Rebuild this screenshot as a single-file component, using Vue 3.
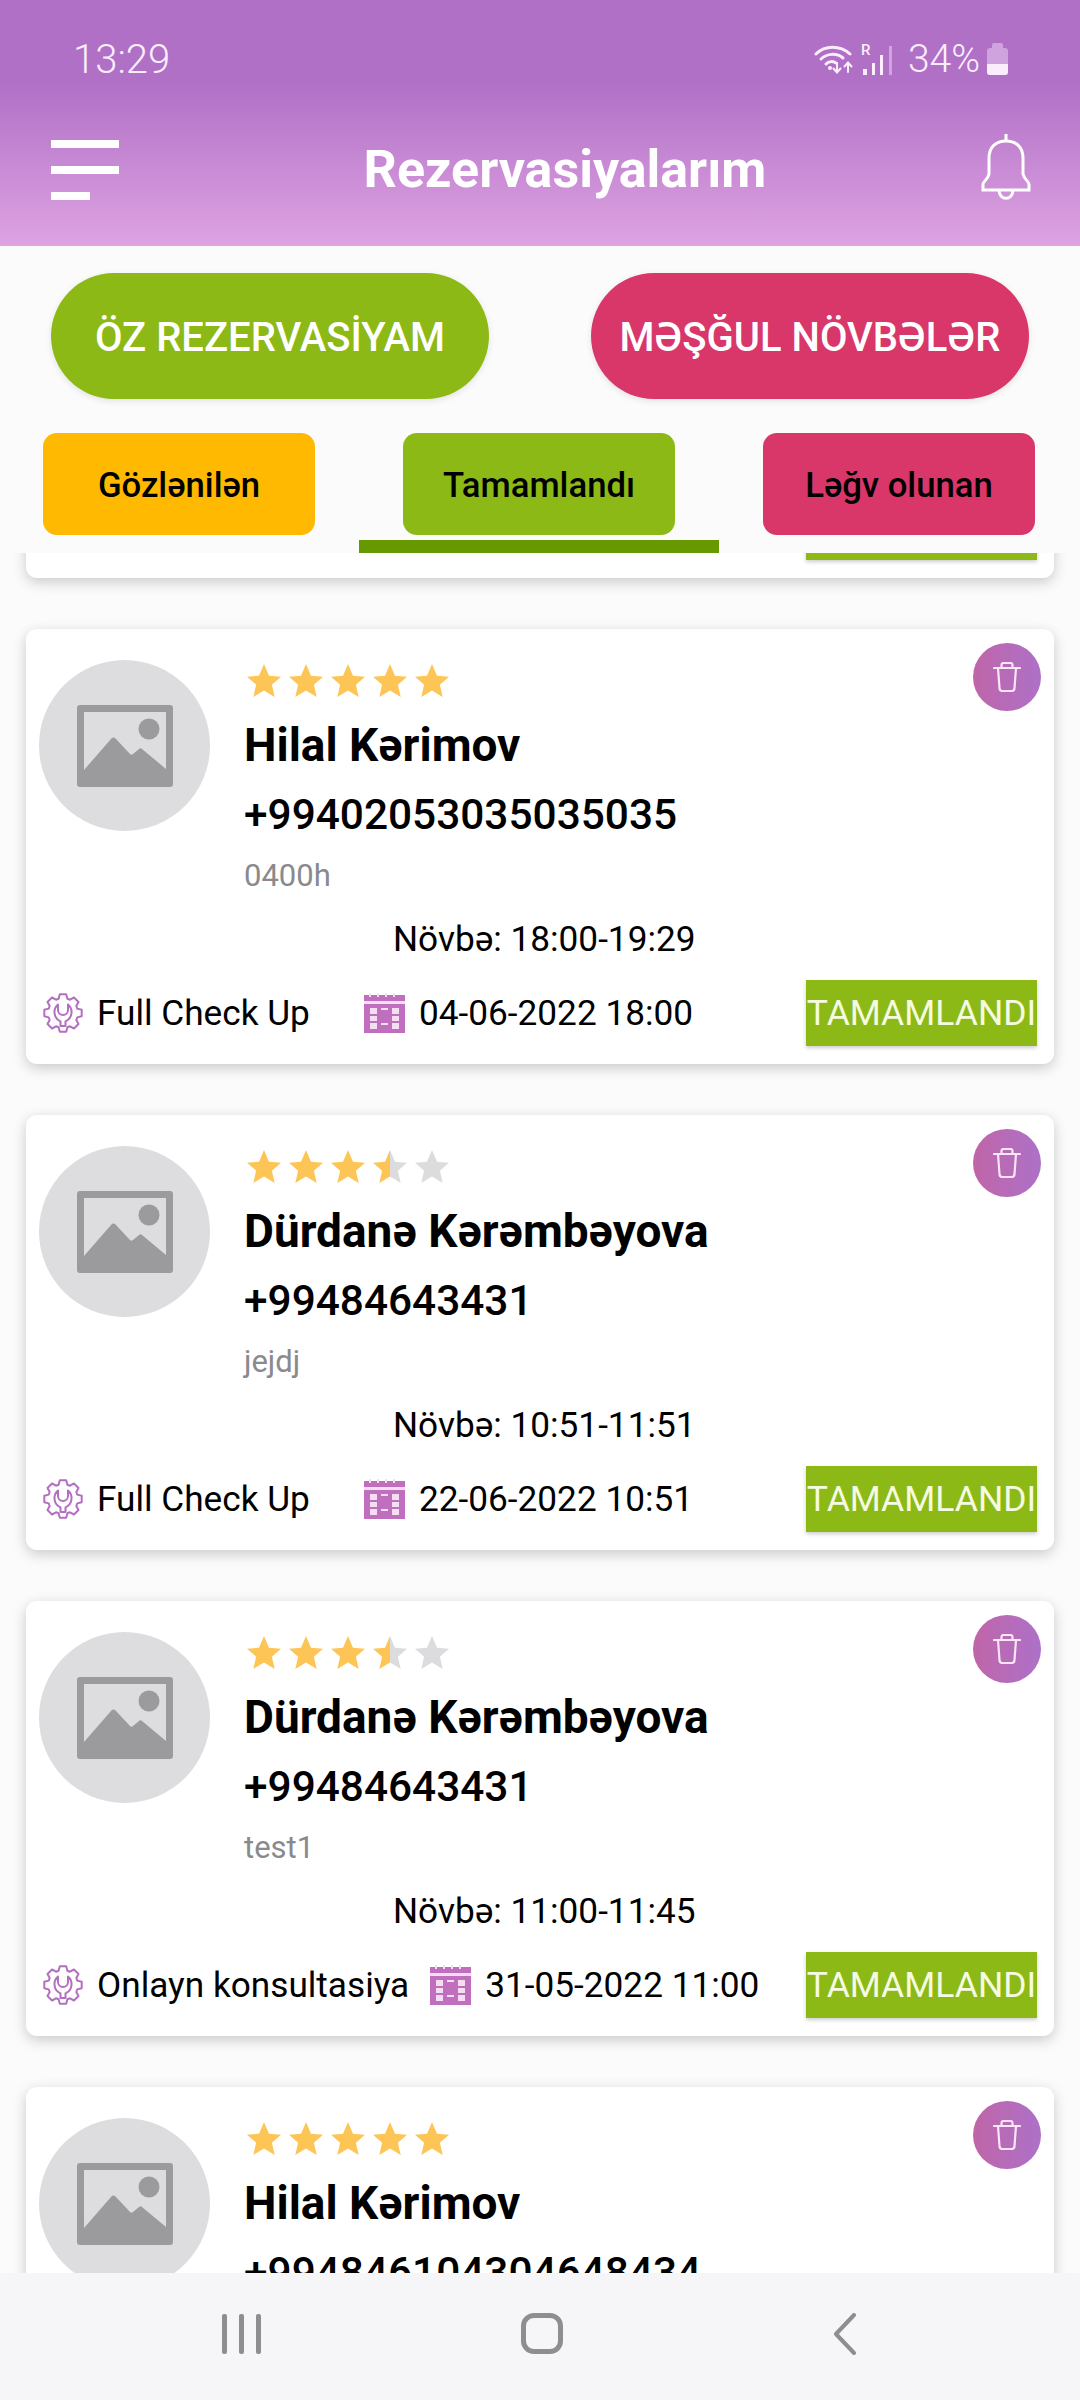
<template>
  <div class="screen">
    <header class="header">
      <div class="status">
        <span class="clock">13:29</span>
        <div class="status-right">
          <svg class="wifi" viewBox="0 0 40 30" aria-hidden="true">
            <g fill="none" stroke="#fbeefc" stroke-width="3" stroke-linecap="round">
              <path d="M2 10 C11 1 26 1 36 10" />
              <path d="M7 15 C13 9 23 9 29 14" />
              <path d="M12 20 C15 17 19 17 22 19" />
              <path d="M23 19v9M19.500 24.500 23 28.500l3.500-4" stroke-width="2" />
              <path d="M34 28v-9M30.500 22.500 34 18.500l3.500 4" stroke-width="2" />
            </g>
            <circle cx="16" cy="24" r="2" fill="#fbeefc" />
          </svg>
          <svg class="signal" viewBox="0 0 34 32" aria-hidden="true">
            <text x="0" y="12" class="roam">R</text>
            <rect x="2" y="26" width="4" height="6" fill="#fbeefc" />
            <rect x="11" y="20" width="3" height="12" fill="#fbeefc" />
            <rect x="19" y="12" width="3" height="20" fill="#fbeefc" />
            <rect x="28" y="3" width="3" height="29" fill="#cfa3de" />
          </svg>
          <span class="battery-text">34%</span>
          <div class="battery"><div class="battery-fill"></div></div>
        </div>
      </div>
      <div class="toolbar">
        <div class="burger">
          <span></span>
          <span></span>
          <span class="short"></span>
        </div>
        <h1 class="title">Rezervasiyalarım</h1>
        <svg class="bell" viewBox="0 0 50 66" aria-hidden="true">
          <g fill="none" stroke="#fff" stroke-width="3">
            <path d="M25 0v7" />
            <path d="M2 56v-6c0-2 5-5 6-10V24C8 13 15 7 25 7s17 6 17 17v16c1 5 6 8 6 10v6z" />
            <path d="M18 56c0 11 14 11 14 0" />
          </g>
        </svg>
      </div>
    </header>

    <div class="switch">
      <button class="pill green">ÖZ REZERVASİYAM</button>
      <button class="pill pink">MƏŞĞUL NÖVBƏLƏR</button>
    </div>

    <div class="tabs">
      <div v-for="t in tabs" :key="t.label" class="tab" :class="{ active: t.active }">
        <button class="tab-btn" :class="t.color">{{ t.label }}</button>
      </div>
    </div>

    <div class="list">
      <article v-for="(c, i) in cards" :key="i" class="card">
        <div class="trash">
          <svg viewBox="0 0 28 30" aria-hidden="true">
            <g fill="none" stroke="#fbe6f6" stroke-width="2.200" stroke-linejoin="round" stroke-linecap="round">
              <path d="M1 6h26" />
              <path d="M8.500 6V3c0-1 1-2 2-2h7c1 0 2 1 2 2v3" />
              <path d="M5 6l1.500 20c0 2 1 3 3 3h9c2 0 3-1 3-3L23 6" />
            </g>
          </svg>
        </div>
        <div class="top">
          <div class="avatar">
            <svg viewBox="0 0 96 82" aria-hidden="true">
              <path fill="#9b9a9d" fill-rule="evenodd" d="M3 0h90a3 3 0 0 1 3 3v76a3 3 0 0 1-3 3H3a3 3 0 0 1-3-3V3a3 3 0 0 1 3-3zM7 7v58l27-31c2-2 3-2 5 0l14 15c1 1 2 1 3 0l6-5c1-1 2-1 3 0l24 20V7z" />
              <circle cx="72" cy="24" r="10.500" fill="#9b9a9d" />
            </svg>
          </div>
          <div class="info">
            <div class="stars">
              <svg v-for="n in 5" :key="n" class="star" viewBox="0 0 34 33" aria-hidden="true">
                <defs>
                  <linearGradient :id="`half-${i}-${n}`">
                    <stop :offset="fillOf(c.rating, n)" stop-color="#fdc556" />
                    <stop :offset="fillOf(c.rating, n)" stop-color="#dcdcde" />
                  </linearGradient>
                </defs>
                <path :fill="`url(#half-${i}-${n})`" d="M17 0l5 11.700 12 1-9.100 8 2.800 12.300L17 26.500 6.300 33l2.800-12.300-9.100-8 12-1z" />
              </svg>
            </div>
            <div class="name">{{ c.name }}</div>
            <div class="phone">{{ c.phone }}</div>
            <div class="note">{{ c.note }}</div>
          </div>
        </div>
        <div class="shift">{{ c.shift }}</div>
        <div class="bottom">
          <svg class="gear" viewBox="0 0 40 40" aria-hidden="true">
            <g fill="none" stroke="#b36fc0" stroke-width="2" stroke-linejoin="round">
              <path :d="gearPath" />
              <path d="M15 11.500a10 10 0 0 0 2.500 16.800V33h5v-4.700A10 10 0 0 0 25 11.500V17a5 5 0 0 1-10 0z" />
            </g>
          </svg>
          <span class="service">{{ c.service }}</span>
          <svg class="calendar" viewBox="0 0 41 40" aria-hidden="true">
            <rect y="2" width="41" height="38" fill="#c06fbf" />
            <rect y="8" width="41" height="3" fill="#f3dff1" />
            <g fill="#f3dff1">
              <rect x="5" y="0" width="2" height="4" />
              <rect x="13" y="0" width="2" height="4" />
              <rect x="21" y="0" width="2" height="4" />
              <rect x="29" y="0" width="2" height="4" />
              <rect x="6" y="15" width="7" height="6" />
              <rect x="28" y="15" width="7" height="6" />
              <rect x="6" y="23" width="7" height="5" />
              <rect x="28" y="23" width="7" height="5" />
              <rect x="6" y="30" width="7" height="6" />
              <rect x="28" y="30" width="7" height="6" />
              <rect x="17" y="15" width="7" height="2" />
              <rect x="17" y="30" width="7" height="2" />
            </g>
          </svg>
          <span class="date">{{ c.date }}</span>
          <span class="done">TAMAMLANDI</span>
        </div>
      </article>
    </div>

    <nav class="navbar">
      <div class="recents"><span></span><span></span><span></span></div>
      <div class="home"></div>
      <svg class="back" viewBox="0 0 24 42" aria-hidden="true">
        <path d="M21 2 3 21l18 19" fill="none" stroke="#8e8e90" stroke-width="4" stroke-linecap="round" stroke-linejoin="round" />
      </svg>
    </nav>
  </div>
</template>

<script setup>
const tabs = [
  { label: 'Gözlənilən', color: 'amber' },
  { label: 'Tamamlandı', color: 'green', active: true },
  { label: 'Ləğv olunan', color: 'pink' },
]

const cards = [
  { name: '', phone: '', note: '', shift: '', service: '', date: '', rating: 5 },
  {
    name: 'Hilal Kərimov',
    phone: '+99402053035035035',
    note: '0400h',
    shift: 'Növbə: 18:00-19:29',
    service: 'Full Check Up',
    date: '04-06-2022 18:00',
    rating: 5,
  },
  {
    name: 'Dürdanə Kərəmbəyova',
    phone: '+99484643431',
    note: 'jejdj',
    shift: 'Növbə: 10:51-11:51',
    service: 'Full Check Up',
    date: '22-06-2022 10:51',
    rating: 3.5,
  },
  {
    name: 'Dürdanə Kərəmbəyova',
    phone: '+99484643431',
    note: 'test1',
    shift: 'Növbə: 11:00-11:45',
    service: 'Onlayn konsultasiya',
    date: '31-05-2022 11:00',
    rating: 3.5,
  },
  {
    name: 'Hilal Kərimov',
    phone: '+994846104304648434',
    note: '',
    shift: '',
    service: '',
    date: '',
    rating: 5,
  },
]

// share of star n that is coloured
function fillOf(rating, n) {
  return Math.max(0, Math.min(1, rating - n + 1))
}

// 8-tooth outline round the centre of a 40x40 box
const gearPath = (() => {
  const pts = []
  for (let i = 0; i < 8; i++) {
    const a = (i * Math.PI) / 4 - Math.PI / 2
    for (const [r, d] of [[15, -0.3], [19, -0.17], [19, 0.17], [15, 0.3]]) {
      const x = 20 + r * Math.cos(a + d)
      const y = 20 + r * Math.sin(a + d)
      pts.push(`${x.toFixed(1)} ${y.toFixed(1)}`)
    }
  }
  return `M${pts.join('L')}Z`
})()
</script>

<style scoped>
.screen {
  width: 1080px;
  height: 2400px;
  display: flex;
  flex-direction: column;
  overflow: hidden;
  background: #fbfbfc;
  font-family: Roboto, "Noto Sans", sans-serif;
  color: #000;
}

.header {
  height: 246px;
  flex: none;
  background: linear-gradient(180deg, #b070c6 0%, #b070c6 33%, #dea3e2 100%);
  color: #fff;
}

.status {
  height: 90px;
  padding: 28px 72px 0 73px;
  box-sizing: border-box;
  display: flex;
  justify-content: space-between;
  align-items: center;
  color: #fbeefc;
  font-size: 39px;
  font-weight: 300;
}

.clock {
  font-size: 40px;
}

.status-right {
  display: flex;
  align-items: center;
}

.wifi {
  width: 40px;
  height: 30px;
}

.signal {
  width: 34px;
  height: 32px;
  margin-left: 7px;
}

.roam {
  font-size: 15px;
  font-weight: 500;
  fill: #fbeefc;
}

.battery-text {
  margin-left: 13px;
}

.battery {
  position: relative;
  width: 21px;
  height: 27px;
  margin: 5px 0 0 7px;
  border-radius: 3px;
  background: #cfa3de;
}

.battery::before {
  content: "";
  position: absolute;
  top: -5px;
  left: 5px;
  width: 11px;
  height: 5px;
  border-radius: 2px 2px 0 0;
  background: #cfa3de;
}

.battery-fill {
  position: absolute;
  left: 0;
  right: 0;
  bottom: 0;
  height: 11px;
  border-radius: 0 0 3px 3px;
  background: #fbeefc;
}

.toolbar {
  height: 156px;
  padding: 0 49px 0 51px;
  display: flex;
  align-items: flex-start;
  justify-content: space-between;
}

.burger {
  width: 68px;
  padding-top: 50px;
  display: flex;
  flex-direction: column;
  gap: 18px;
}

.burger span {
  height: 8px;
  background: #fff;
}

.burger .short {
  width: 39px;
}

.title {
  margin: 41px 0 0 30px;
  font-size: 52px;
  line-height: 78px;
  font-weight: 700;
  white-space: nowrap;
}

.bell {
  width: 50px;
  height: 66px;
  margin-top: 44px;
}

.switch {
  flex: none;
  height: 126px;
  margin-top: 27px;
  padding: 0 51px;
  display: flex;
  justify-content: space-between;
}

.pill {
  width: 438px;
  border: 0;
  padding: 3px 0 0;
  border-radius: 63px;
  color: #fff;
  font-family: inherit;
  font-size: 40px;
  font-weight: 500;
  box-shadow: 0 2px 6px rgba(0, 0, 0, 0.1);
}

.green {
  background: #8cb916;
}

.pink {
  background: #d9366a;
}

.amber {
  background: #ffb900;
}

.tabs {
  flex: none;
  height: 120px;
  margin-top: 34px;
  padding: 0 45px 0 43px;
  display: flex;
  justify-content: space-between;
}

.tab {
  width: 272px;
  height: 120px;
  display: flex;
  justify-content: center;
  position: relative;
}

.tab-btn {
  width: 272px;
  height: 102px;
  border: 0;
  padding: 2px 0 0;
  border-radius: 14px;
  color: #000;
  font-family: inherit;
  font-size: 34.700px;
  font-weight: 500;
}

.tab.active::after {
  content: "";
  position: absolute;
  left: -44px;
  right: -44px;
  bottom: 0;
  height: 13px;
  background: #669900;
}

.list {
  flex: 1;
  min-height: 0;
  overflow: hidden;
  padding: 0 26px;
}

.card {
  position: relative;
  height: 435px;
  box-sizing: border-box;
  margin-bottom: 51px;
  padding: 31px 17px 0 13px;
  display: flex;
  flex-direction: column;
  background: #fff;
  border-radius: 11px;
  box-shadow: 0 4px 14px rgba(0, 0, 0, 0.2);
}

.card:first-child {
  margin-top: -410px;
}

.trash {
  position: absolute;
  top: 14px;
  right: 13px;
  width: 68px;
  height: 68px;
  border-radius: 50%;
  background: linear-gradient(90deg, #c065a8, #ad71c8);
  display: flex;
  align-items: center;
  justify-content: center;
}

.trash svg {
  width: 28px;
  height: 30px;
}

.top {
  display: flex;
  height: 233px;
}

.avatar {
  flex: none;
  width: 171px;
  height: 171px;
  border-radius: 50%;
  background: #dddcdf;
  display: flex;
  align-items: center;
  justify-content: center;
}

.avatar svg {
  width: 96px;
  height: 82px;
}

.info {
  margin-left: 34px;
}

.stars {
  display: flex;
  gap: 8px;
  height: 33px;
  margin: 4px 0 0 3px;
}

.star {
  width: 34px;
  height: 33px;
}

.name {
  margin-top: 14px;
  font-size: 46px;
  line-height: 69px;
  height: 69px;
  font-weight: 700;
  white-space: nowrap;
}

.phone {
  font-size: 42.400px;
  line-height: 70px;
  height: 70px;
  font-weight: 500;
  white-space: nowrap;
}

.note {
  margin-top: 4px;
  font-size: 31px;
  line-height: 44px;
  height: 44px;
  color: #8a8a8e;
}

.shift {
  height: 44px;
  margin-top: 24px;
  padding-left: 354px;
  font-size: 35.200px;
  line-height: 44px;
  white-space: nowrap;
}

.bottom {
  display: flex;
  align-items: center;
  height: 66px;
  margin-top: 19px;
  padding-left: 4px;
  font-size: 35.200px;
}

.gear {
  flex: none;
  width: 40px;
  height: 40px;
}

.service {
  min-width: 246px;
  margin-left: 14px;
  white-space: nowrap;
}

.calendar {
  flex: none;
  width: 41px;
  height: 40px;
  margin: 0 14px 0 21px;
}

.date {
  white-space: nowrap;
}

.done {
  margin-left: auto;
  width: 231px;
  height: 66px;
  flex: none;
  background: #8cb916;
  color: #f5fbe0;
  font-size: 35.500px;
  line-height: 66px;
  text-align: center;
  white-space: nowrap;
  box-shadow: 0 2px 4px rgba(0, 0, 0, 0.2);
}

.navbar {
  flex: none;
  height: 127px;
  box-sizing: border-box;
  background: #f6f5f7;
  position: relative;
  z-index: 1;
  display: flex;
  align-items: flex-start;
  padding: 40px 223px 0 222px;
  justify-content: space-between;
}

.recents {
  display: flex;
  gap: 12px;
  height: 40px;
  margin-top: 1px;
}

.recents span {
  width: 5px;
  background: #8e8e90;
  border-radius: 2px;
}

.home {
  width: 42px;
  height: 41px;
  margin-right: 10px;
  box-sizing: border-box;
  border: 5px solid #8e8e90;
  border-radius: 13px;
}

.back {
  width: 24px;
  height: 42px;
}
</style>

<style>
html,
body {
  margin: 0;
}
</style>
